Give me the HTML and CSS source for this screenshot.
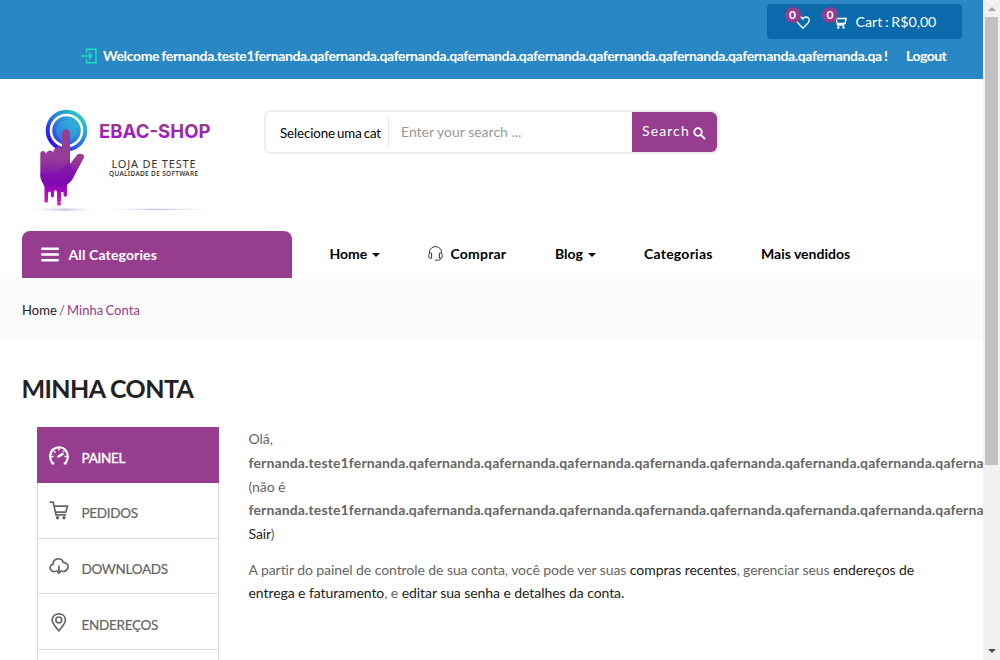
FILE: index.html
```html
<!DOCTYPE html>
<html lang="pt-BR">
<head>
<meta charset="utf-8">
<title>Minha Conta - EBAC Shop</title>
<link rel="stylesheet" href="styles.css">
</head>
<body>
<div class="window">
  <div class="page">
    <header class="topbar">
      <div class="cart-box">
        <a class="cart-link wish">
          <svg width="14" height="13" viewBox="0 0 14 13"><path d="M7 12.2 1.8 6.8C-.2 4.5 1 1 4 1 5.500 1 6.500 2 7 3 7.500 2 8.500 1 10 1c3 0 4.200 3.500 2.200 5.800Z"/></svg>
          <span class="badge">0</span>
        </a>
        <a class="cart-link basket">
          <svg width="14" height="13" viewBox="0 0 14 13"><path d="M0 .8H2.700L4.500 9H11.200M3 2.500H13.200L12 7.500H4.200"/><circle class="dot" cx="5.300" cy="11.500" r="1.200"/><circle class="dot" cx="10.500" cy="11.500" r="1.200"/></svg>
          <span class="badge">0</span>
        </a>
        <span class="cart-total">Cart : R$0,00</span>
      </div>
      <div class="welcome">
        <svg class="login" width="16" height="16" viewBox="0 0 16 16"><path d="M5.500 5V1.200H15V14.800H5.500V11M.5 8H10.500M7.700 4.800 10.800 8 7.700 11.200"/></svg>
        <span class="greeting">Welcome fernanda.teste1fernanda.qafernanda.qafernanda.qafernanda.qafernanda.qafernanda.qafernanda.qafernanda.qafernanda.qa !</span>
        <a class="logout">Logout</a>
      </div>
    </header>

    <div class="masthead">
      <svg class="logo" width="210" height="130" viewBox="0 0 210 130" font-family="Inter, sans-serif">
        <defs>
          <linearGradient id="ring" x1="0" y1="1" x2="1" y2="0"><stop offset=".1" stop-color="#2c08fb"/><stop offset=".5" stop-color="#2878da"/><stop offset="1" stop-color="#2be2b5"/></linearGradient>
          <linearGradient id="disc" x1="0" y1="1" x2="1" y2="0"><stop offset="0" stop-color="#2b35ed"/><stop offset="1" stop-color="#2fcacb"/></linearGradient>
          <linearGradient id="hand" x1="0" y1="0" x2="0" y2="1"><stop offset="0" stop-color="#963e92"/><stop offset=".4" stop-color="#963c98"/><stop offset=".72" stop-color="#7d08b5"/><stop offset="1" stop-color="#d416c5"/></linearGradient>
          <linearGradient id="word" x1="0" y1="0" x2="0" y2="1"><stop offset=".2" stop-color="#963d90"/><stop offset=".85" stop-color="#a80bda"/></linearGradient>
          <radialGradient id="shade"><stop offset="0" stop-color="#b9b9df"/><stop offset="1" stop-color="#fff" stop-opacity="0"/></radialGradient>
        </defs>
        <circle cx="46.500" cy="35.500" r="18.800" fill="none" stroke="url(#ring)" stroke-width="4"/>
        <circle cx="46.500" cy="35.500" r="14.300" fill="url(#disc)"/>
        <circle cx="46.500" cy="35.500" r="10.500" fill="#35c3df" opacity=".35"/>
        <path fill="url(#hand)" d="M20.300 59C20.300 55 25.500 55 26 59C26.500 55 32.500 54 33 58C33.500 51.500 41 50 42 55V39C42 32.500 50 32.500 50 39V69L57 60C59 57.500 65 59 64 62.500L52.500 84C50.500 88 47 88 47 91V100Q45.500 104 43.500 100V97H41V106Q39 110 37 106V97Q35.500 93 34 97V101Q32.500 104 31 101V98Q29.500 95 28 98V105Q26 109 24.500 105V93C24.500 89 20.300 86 20.300 81Z"/>
        <path d="M20.300 78C32 81 44 75 49 66 51 75 54 72 56 77L52.500 84C50.500 88 47 88 47 91H24.500C24.500 88 20.300 85 20.300 78Z" fill="#7e0aaf" opacity=".5"/>
        <circle cx="26.200" cy="105.800" r="1.900" fill="#d624bf"/><circle cx="39" cy="108.800" r="2" fill="#e01bc0"/><circle cx="39" cy="105" r="1.200" fill="#cf23c6"/>
        <ellipse cx="44" cy="114.600" rx="36" ry="2.600" fill="url(#shade)"/>
        <ellipse cx="138" cy="114.400" rx="62" ry="1.600" fill="url(#shade)"/>
        <text x="79" y="43" font-size="19" font-weight="700" fill="url(#word)" textLength="111.500" lengthAdjust="spacingAndGlyphs">EBAC-SHOP</text>
        <text x="91.500" y="73" font-family="Noto Sans, sans-serif" font-size="11" fill="#333" textLength="84" lengthAdjust="spacing">LOJA DE TESTE</text>
        <text x="89" y="80.500" font-family="Noto Sans, sans-serif" font-size="6.500" font-weight="500" fill="#222" textLength="89" lengthAdjust="spacing">QUALIDADE DE SOFTWARE</text>
      </svg>
      <form class="search">
        <span class="select">Selecione uma cat</span>
        <span class="query">Enter your search ...</span>
        <span class="submit">Search
          <svg width="13" height="13" viewBox="0 0 13 13"><circle cx="5" cy="5" r="3.800"/><path d="m7.800 7.800 4.200 4.200"/></svg>
        </span>
      </form>
    </div>

    <nav class="nav">
      <div class="all-cats">
        <svg width="18" height="15" viewBox="0 0 18 15"><path d="M1.200 1.700H16.800M1.200 7.500H16.800M1.200 13.200H16.800"/></svg>
        <span>All Categories</span>
      </div>
      <div class="links">
        <a class="l-home">Home<i class="caret"></i></a>
        <a class="l-comprar"><svg width="15" height="15" viewBox="0 0 15 15"><path d="M1.500 7V5.500C2.500-1 12.500-1 13.500 5.500V7M3.600 7.200C1.500 6.500.7 7.800.7 9.800S1.700 13 3.600 12.200ZM11.400 7.200C13.500 6.500 14.300 7.800 14.300 9.800S13.300 13 11.400 12.200ZM13 12.500C12.500 14 11 14.200 9.500 14.200M7 14.200H9.500"/></svg>Comprar</a>
        <a class="l-blog">Blog<i class="caret"></i></a>
        <a class="l-cat">Categorias</a>
        <a class="l-top">Mais vendidos</a>
      </div>
    </nav>

    <div class="crumbs"><span class="c-home">Home</span> / <span class="c-here">Minha Conta</span></div>

    <main class="account">
      <h1>MINHA CONTA</h1>
      <div class="cols">
        <ul class="menu">
          <li class="active"><svg width="20" height="19" viewBox="0 0 20 19"><path stroke-width="2.200" d="M5.300 17.300H3.500C-.3 12 .8 6 4.500 3.200 8 .5 13 .6 16 3.600 19.800 7.500 19.500 13 16.500 17.300H14.700"/><path stroke-width="1.500" d="M10 2V4.500M5 5 6.500 6.500M15 5 14 6M2 10.500H4.500M18 10.500H15.500"/><path stroke-width="2.600" stroke-linecap="round" d="m9.500 10.500 4-2.500"/></svg><span>PAINEL</span></li>
          <li><svg width="20" height="19" viewBox="0 0 20 19"><path stroke-width="1.700" d="M.5 1.200H4.200L7 13.800H17M4.800 5.200H18.500L16.800 11.200H6.400"/><circle class="fill" cx="8.500" cy="16.800" r="1.700"/><circle class="fill" cx="15" cy="16.800" r="1.700"/></svg><span>PEDIDOS</span></li>
          <li><svg width="20" height="19" viewBox="0 0 20 19"><path stroke-width="1.700" d="M7 14.500H5C1.500 14.500-.2 10 2.600 7.800 3.200 7.300 3.800 7.200 4.100 7.200 4 1 12.500-.2 14.200 5.300 18.200 5.300 20 9 18.300 12 17.400 13.800 16 14.500 14 14.500H12.800M9.900 8.500V16M7.200 13.200 9.900 16.200 12.600 13.200"/></svg><span>DOWNLOADS</span></li>
          <li><svg width="20" height="19" viewBox="0 0 20 19"><path stroke-width="1.700" d="M9.800 17.800C7 14.500 3.200 10.500 3.200 7 3.200-1.200 16.400-1.200 16.400 7 16.400 10.500 12.600 14.500 9.800 17.800Z"/><circle stroke-width="1.700" cx="9.800" cy="6.900" r="2.900"/></svg><span>ENDEREÇOS</span></li>
          <li></li>
        </ul>
        <section class="content">
          <p>Olá,<br><b>fernanda.teste1fernanda.qafernanda.qafernanda.qafernanda.qafernanda.qafernanda.qafernanda.qafernanda.qafernanda.qa</b><br>(não é<br><b>fernanda.teste1fernanda.qafernanda.qafernanda.qafernanda.qafernanda.qafernanda.qafernanda.qafernanda.qafernanda.qa</b><br><a>Sair</a>)</p>
          <p class="intro">A partir do painel de controle de sua conta, você pode ver suas <a>compras recentes</a>, gerenciar seus <a>endereços de<br>entrega e faturamento</a>, e <a>editar sua senha e detalhes da conta.</a></p>
        </section>
      </div>
    </main>
  </div>
  <div class="scrollbar"><i class="up"></i><div class="thumb"></div><i class="down"></i></div>
</div>
</body>
</html>
```
FILE: styles.css
```css
* { box-sizing: border-box; }
body { margin: 0; font: 14px/24px Lato, sans-serif; color: #666; background: #fff; }
svg { fill: none; stroke: currentColor; flex: none; }
.window { display: flex; width: 1000px; height: 660px; overflow: hidden; }
.page { width: 983px; flex: none; overflow: hidden; }

.topbar { height: 79px; background: #2a87c5; color: #fff; padding: 4px 21px 0 0; display: flex; flex-direction: column; align-items: flex-end; }
.cart-box { width: 195px; height: 35px; border-radius: 4px; background: #0a6aab; display: flex; align-items: center; padding-left: 28.500px; }
.cart-link { position: relative; display: flex; width: 37.500px; padding-top: 1px; stroke-width: 1.3; }
.basket { width: 22.500px; }
.cart-link .dot { fill: #fff; stroke: none; }
.badge { position: absolute; left: -11px; top: -8px; width: 16px; height: 16px; border-radius: 50%; background: #963d8f; font: 700 12px/16px Lato, sans-serif; text-align: center; }
.cart-total { white-space: nowrap; letter-spacing: .02px; word-spacing: -1px; font-size: 14.200px; }
.welcome { width: 881px; height: 34px; display: flex; align-items: center; font-weight: 700; white-space: nowrap; }
.login { color: #16e3b9; stroke-width: 1.400; margin-right: 6px; }
.greeting { width: 803px; letter-spacing: -.365px; word-spacing: -.8px; }
.logout { letter-spacing: -.5px; }

.masthead { height: 152px; display: flex; padding: 16px 0 0 20px; }
.logo { stroke: none; }
.search { width: 455px; height: 44px; margin: 15px 0 0 34px; border: 2px solid #eee; border-radius: 7px; display: flex; align-items: center; }
.select { width: 123px; height: 31px; border-right: 1px solid #e8e8e8; padding-left: 14px; line-height: 32px; color: #000; font-size: 13.300px; letter-spacing: -.1px; word-spacing: -1.300px; white-space: nowrap; }
.query { flex: 1; padding-left: 12px; color: #999; }
.submit { width: 85px; height: 40px; background: #963d8f; color: #fff; border-radius: 0 6px 6px 0; display: flex; align-items: center; gap: 3px; padding: 0 0 2px 10px; letter-spacing: 1.100px; stroke-width: 1.800; }
.submit svg { margin-top: 4px; }

.nav { height: 47px; display: flex; padding-left: 22px; }
.all-cats { width: 270px; border-radius: 8px 8px 0 0; background: #963d8f; color: #fff; display: flex; align-items: center; gap: 9.500px; padding-left: 19px; font-weight: 700; letter-spacing: .13px; }
.all-cats svg { stroke-width: 2.400; stroke-linecap: round; }
.links { display: flex; align-items: center; color: #000; padding: 0 0 2px 37.500px; }
.links a { display: flex; align-items: center; white-space: nowrap; font-weight: 700; }
.links svg { stroke-width: .8; margin-right: 7.500px; }
.links .l-home { width: 98.500px; }
.links .l-comprar { width: 127px; letter-spacing: .2px; }
.links .l-blog { width: 89px; }
.links .l-cat { width: 117px; letter-spacing: .24px; }
.caret { border: 4px solid transparent; border-top-color: #000; border-bottom: 0; margin: 3px 0 0 5px; }

.crumbs { height: 62px; margin-top: 1px; background: #fafafa; padding: 19px 22px; font-size: 13px; letter-spacing: .06px; word-spacing: -1.300px; white-space: pre; }
.c-home { color: #222; }
.c-here { color: #963d8f; }

.account { padding: 29px 0 0 21.500px; }
h1 { margin: 0 0 21px; font: 700 25px/36px Lato, sans-serif; color: #222; letter-spacing: -.6px; }
.cols { display: flex; padding-left: 15.500px; }
.menu { width: 182px; flex: none; margin: 0; padding: 0; list-style: none; font-size: 13.500px; letter-spacing: -.3px; -webkit-text-stroke: .2px currentColor; }
.menu li { height: 55.800px; border: 1px solid #ddd; border-top: 0; display: flex; align-items: center; padding: 6.500px 0 0 11px; }
.menu svg { margin: -5px 12.500px 0 0; }
.menu .fill { fill: #666; stroke: none; }
.menu .active { background: #963d8f; border-color: #963d8f; color: #fff; -webkit-text-stroke-width: .4px; }
.content { margin-left: 29.500px; white-space: nowrap; letter-spacing: -.07px; }
.content b { letter-spacing: .135px; }
.content p { margin: 0 0 12px; line-height: 23.800px; }
.content .intro { line-height: 23.500px; }
.content a { color: #222; }

.scrollbar { width: 17px; flex: none; background: #f1f1f1; display: flex; flex-direction: column; align-items: center; }
.thumb { width: 13px; height: 448px; background: #c1c1c1; margin-top: 6px; }
.up { border: 4px solid transparent; border-bottom-color: #a3a3a3; border-top: 0; margin-top: 7px; }
.down { border: 4px solid transparent; border-top-color: #505050; border-bottom: 0; margin: auto 0 7px; }
```
